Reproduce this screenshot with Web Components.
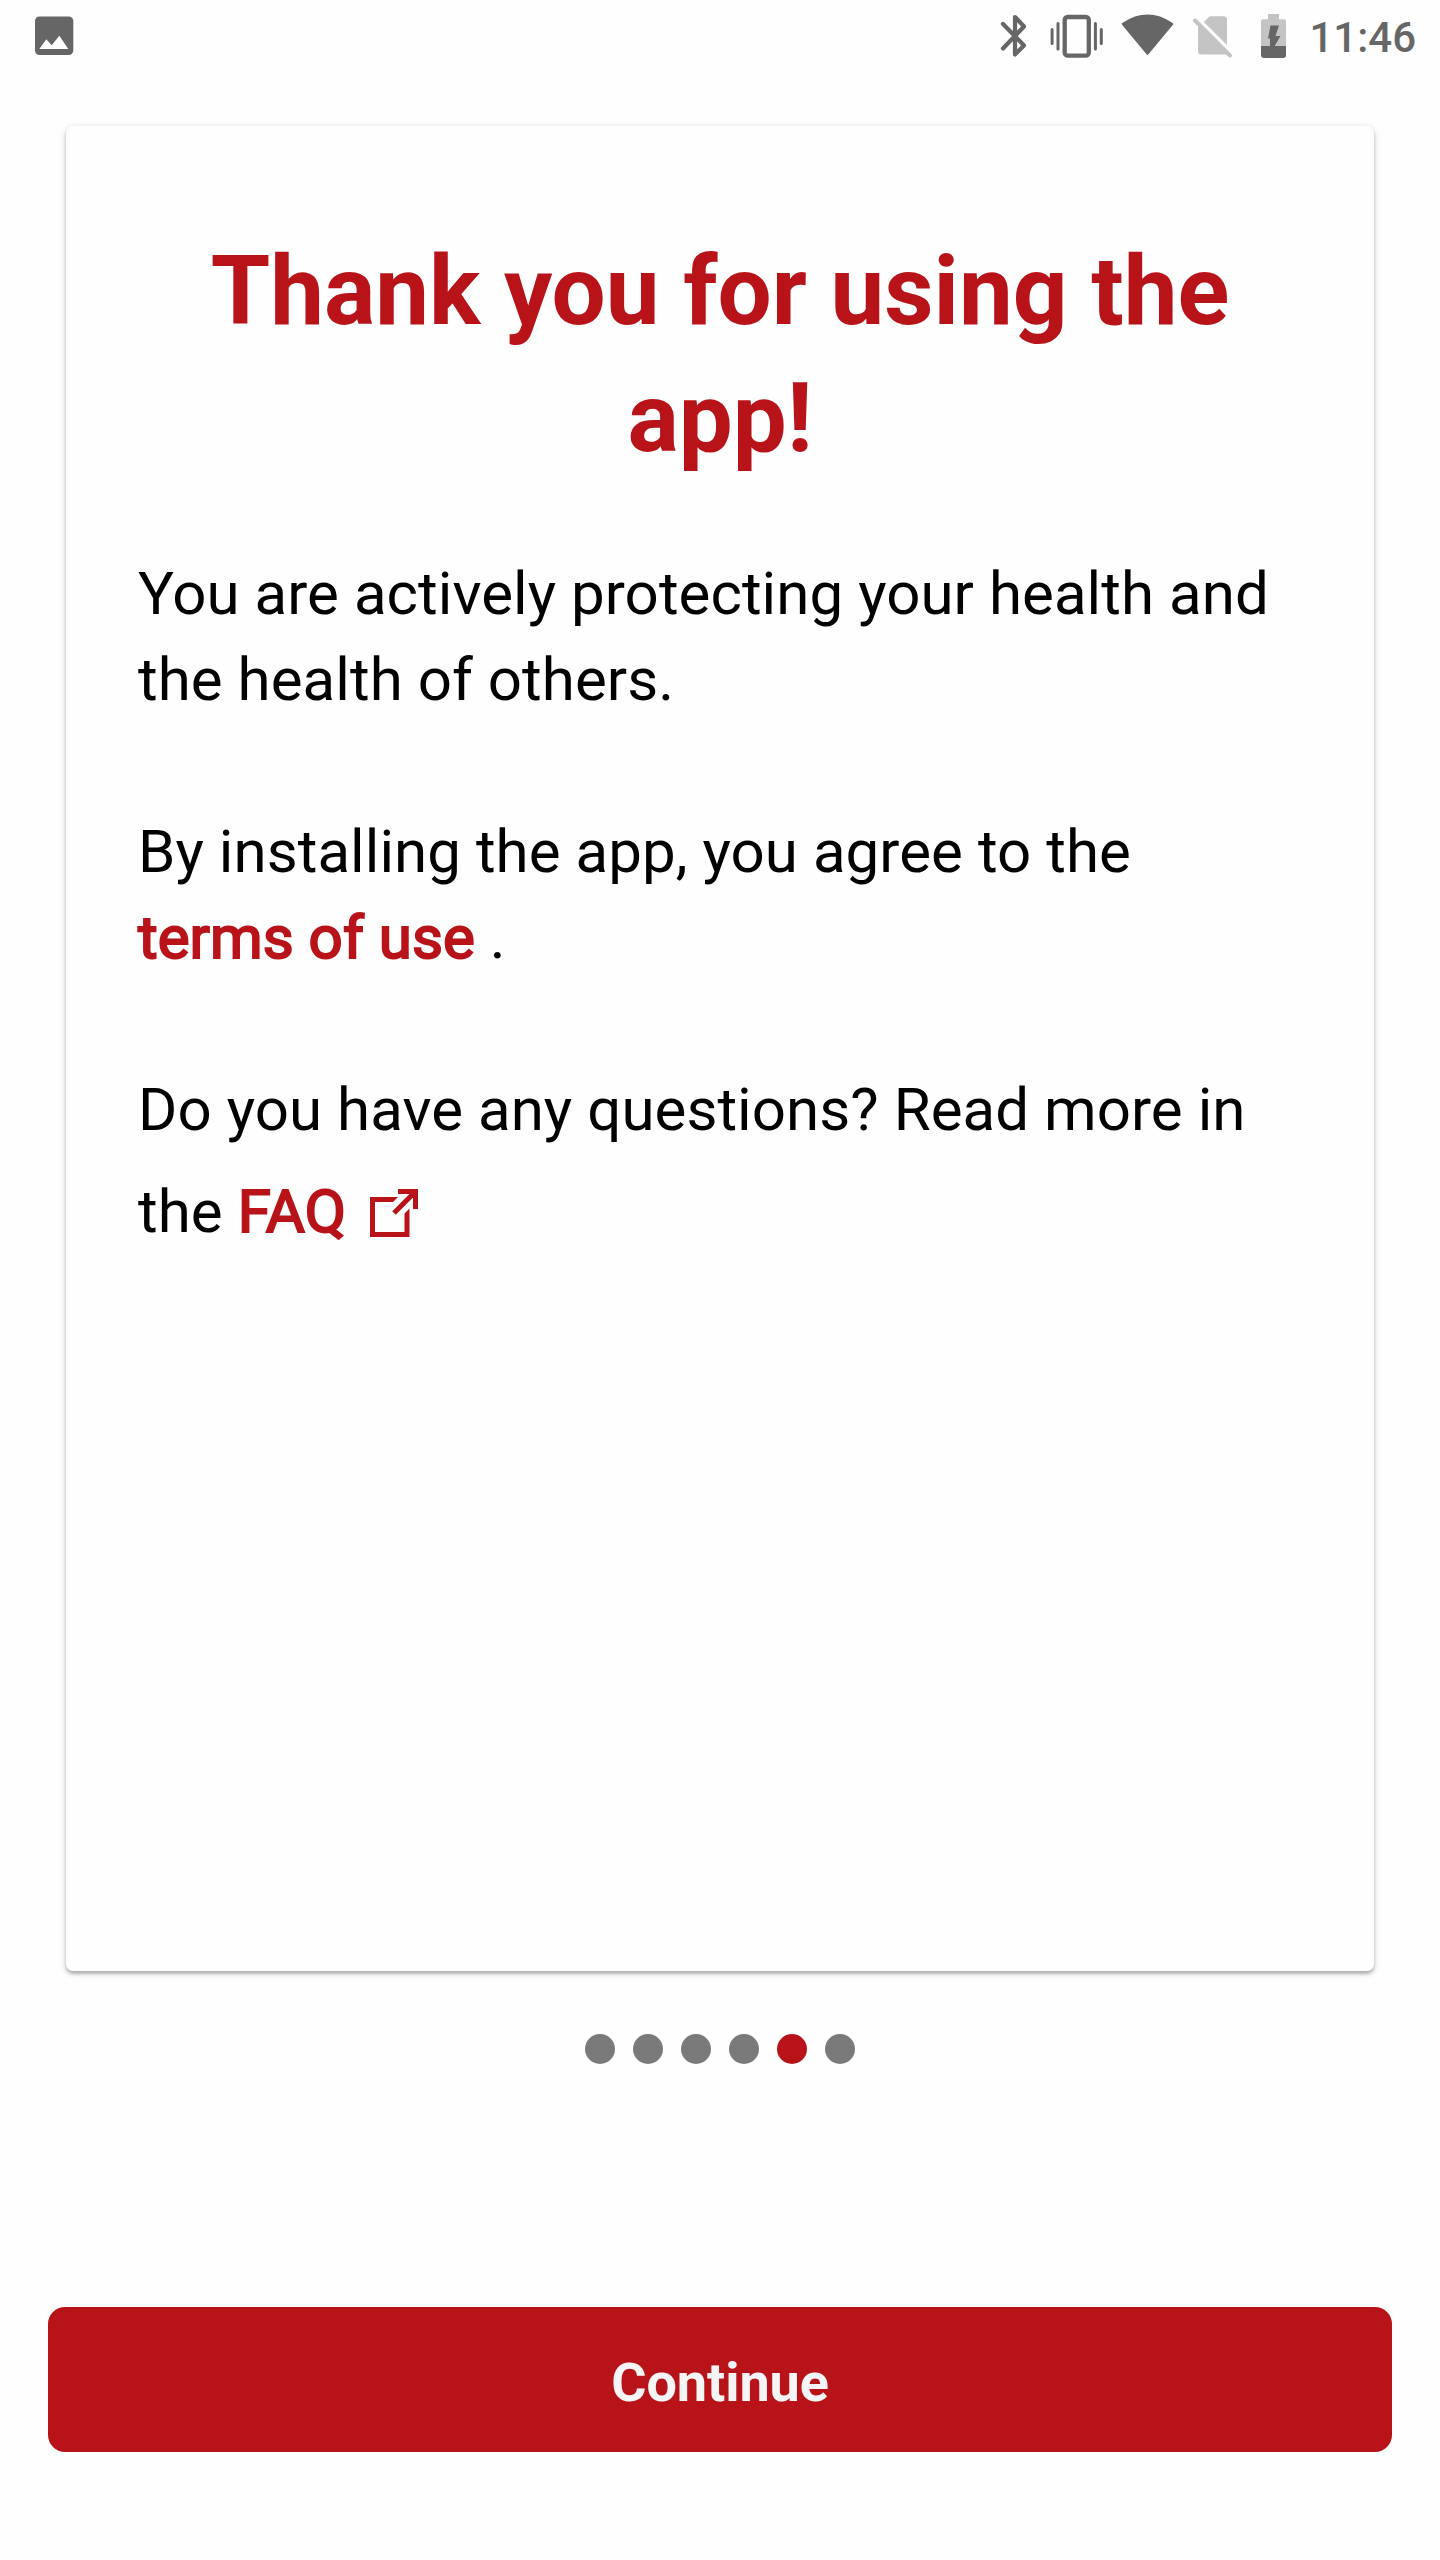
<!DOCTYPE html>
<html lang="en">
<head>
<meta charset="utf-8">
<title>Onboarding</title>
<style>
html,body{margin:0;background:#fefefe}
body{font-family:Roboto,"Liberation Sans",sans-serif;color:#000}
</style>
</head>
<body>
<onboarding-screen></onboarding-screen>
<script>
const define = (name, html) => {
  const t = document.createElement('template');
  t.innerHTML = html;
  customElements.define(name, class extends HTMLElement {
    constructor() {
      super();
      this.attachShadow({mode: 'open'}).append(t.content.cloneNode(true));
    }
  });
};

define('status-bar', `
<style>
:host{display:flex;justify-content:space-between;height:76px;box-sizing:border-box;padding:0 24px 0 32px;color:#666}
svg{display:block;height:76px}
.right{display:flex}
.time{font-size:42px;font-weight:500;line-height:76px;white-space:nowrap}
</style>
<svg width="48" height="76" viewBox="32 0 48 76"><rect x="35" y="16.5" width="38.3" height="38.5" rx="4.5" fill="#666"/><path d="M39.3 49 46.3 39.3 51.7 45.3 59.3 35.7 68.3 49Z" fill="#fff"/></svg>
<div class="right">
<svg width="328" height="76" viewBox="981 0 328 76" fill="none" stroke="#666">
  <path d="M1003 24 1024 45.500 1015 54.500V17L1024 26.500 1003 48.500" stroke-width="4.200" stroke-linecap="round" stroke-linejoin="round"/>
  <rect x="1064.700" y="17" width="24.100" height="38.700" rx="3" stroke-width="4.300"/>
  <path d="M1058 23.500V49M1095.400 23.500V49M1052.100 29.500V43.500M1101.300 29.500V43.500" stroke-width="3" stroke-linecap="round"/>
  <path d="M1123 24Q1147.500 7.500 1172 24L1147.500 53.500Z" fill="#666" stroke-width="2.500" stroke-linejoin="round"/>
  <g stroke="none" fill="#c4c4c4"><path d="M1198 24 1228.500 54.500H1201.500Q1198 54.500 1198 51Z"/><path d="M1203.800 22 1208.500 17.500Q1209.500 16.300 1211 16.300H1223.500Q1227 16.300 1227 20V45Z"/></g>
  <path d="M1195 20.500 1230 55.500" stroke="#c4c4c4" stroke-width="4" stroke-linecap="round"/>
  <path d="M1261 46V21Q1261 19.200 1263 19.200H1268V14H1279V19.200H1284Q1286 19.200 1286 21V46Z" fill="#c4c4c4" stroke="none"/>
  <path d="M1261 46H1286V55Q1286 58 1283 58H1264Q1261 58 1261 55Z" fill="#666" stroke="none"/>
  <path d="M1270.500 25.500H1279L1275.500 36H1280.500L1270 54V38.500H1268Z" fill="#666" stroke="none"/>
</svg>
<span class="time">11:46</span></div>`);

define('info-card', `
<style>
:host{display:flex;flex-direction:column;box-sizing:border-box;width:1308px;height:1845px;margin:50px auto 0;padding:102px 72px 0;border-radius:7px;background:#fefefe;box-shadow:0 3px 3px rgba(0,0,0,.2),0 2px 7px rgba(0,0,0,.18)}
::slotted(h1){margin:0;color:#b9131a;font-size:96px;font-weight:700;line-height:127px;text-align:center;letter-spacing:-.05px}
::slotted(p){margin:0 0 86px;font-size:60px;line-height:86px;letter-spacing:.06px}
.body{padding-top:69px}
</style>
<slot name="title"></slot><div class="body"><slot></slot></div>`);

define('text-link', `
<style>
:host{display:inline;color:#b9131a;-webkit-text-stroke:2px #b9131a}
</style><slot></slot>`);

define('external-icon', `
<style>:host{display:inline-block;width:50px;height:50px;margin-left:24px;vertical-align:-7px}svg{display:block}</style>
<svg width="50" height="50" viewBox="0 0 50 50"><path d="M0 8H28L23 13H5V43H34.500V24.500L39.500 19.500V48H0Z" fill="#b9131a"/><path d="M28 2.500H45.500V20M45 3 24 24" fill="none" stroke="#b9131a" stroke-width="5"/></svg>`);

define('page-dots', `
<style>
:host{display:flex;justify-content:center;gap:18px;margin-top:63px}
i{width:30px;height:30px;border-radius:50%;background:#7a7a7a}
.on{background:#b9131a}
</style><i></i><i></i><i></i><i></i><i class="on"></i><i></i>`);

define('primary-button', `
<style>
:host{display:block;margin:243px 48px 0}
button{display:block;width:100%;height:145px;border:0;border-radius:17px;padding:7px 0 0;background:#b9131a;color:#f5f5f5;font:700 54px/64px Roboto,"Liberation Sans",sans-serif;letter-spacing:-.1px}
</style><button><slot></slot></button>`);

define('onboarding-screen', `
<style>
:host{display:flex;flex-direction:column;width:1440px;height:2560px;overflow:hidden;background:#fefefe}
.line{display:block;white-space:nowrap}
.faq{line-height:118px}
</style>
<status-bar></status-bar>
<info-card>
  <h1 slot="title"><span class="line">Thank you for using the</span><span class="line">app!</span></h1>
  <p><span class="line">You are actively protecting your health and</span><span class="line">the health of others.</span></p>
  <p><span class="line">By installing the app, you agree to the</span><span class="line"><text-link>terms of use</text-link> .</span></p>
  <p><span class="line">Do you have any questions? Read more in</span><span class="line faq">the <text-link>FAQ</text-link><external-icon></external-icon></span></p>
</info-card>
<page-dots></page-dots>
<primary-button>Continue</primary-button>`);
</script>
</body>
</html>
